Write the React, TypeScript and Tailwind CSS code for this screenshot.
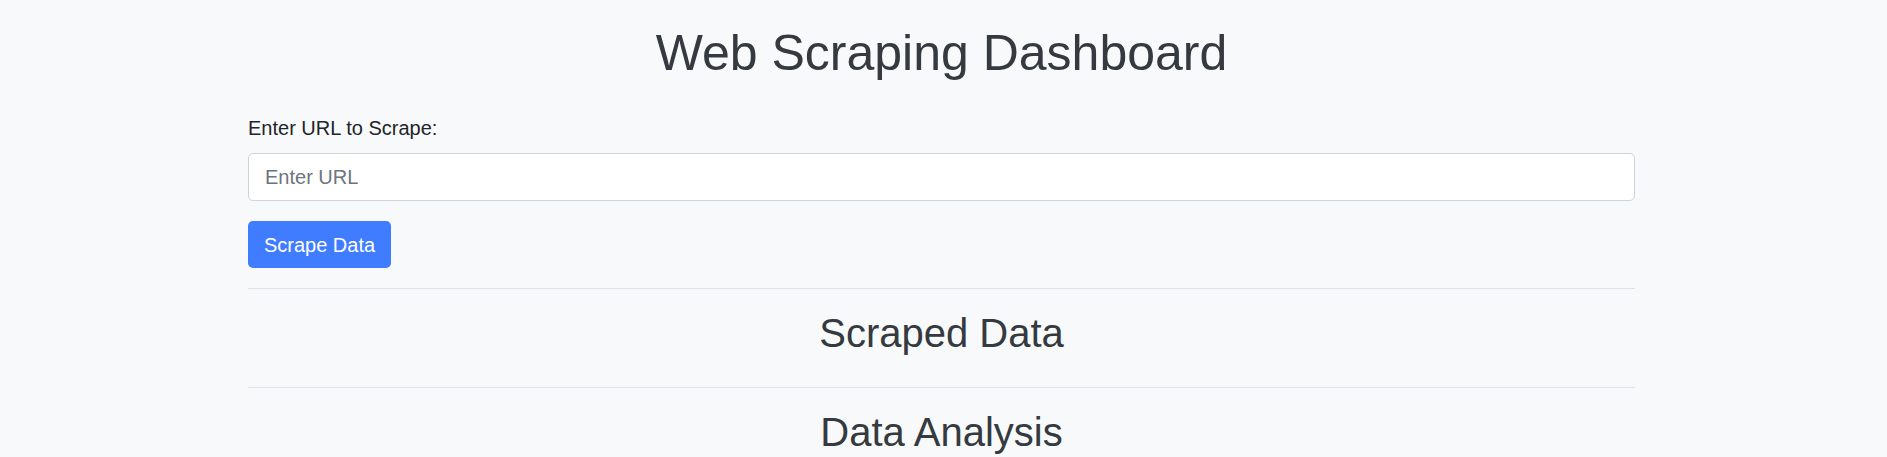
export default function App() {
  return (
    <div className="min-h-screen bg-[#f8f9fa] font-['Liberation_Sans',Arial,sans-serif] text-[#343a40]">
      <div className="ml-[248px] w-[1387px] pt-[23px]">
        <h1 className="text-center text-[50px] leading-[1.2] font-normal">Web Scraping Dashboard</h1>

        <div className="mt-[30px]">
          <label className="block text-[20px] leading-[1.5] text-[#212529]">Enter URL to Scrape:</label>
          <input
            type="text"
            placeholder="Enter URL"
            className="mt-[10px] block h-[48px] w-full rounded-[5px] border border-[#ced4da] bg-white px-4 text-[20px] text-[#495057] placeholder:text-[#6c757d] outline-none"
          />
          <button className="mt-[20px] h-[47px] w-[143px] rounded-[5px] bg-[#3f7cff] text-[20px] text-white">
            Scrape Data
          </button>
        </div>

        <hr className="mt-[20px] border-t border-[#dee2e6]" />
        <h2 className="mt-[20px] text-center text-[40px] leading-[1.2] font-normal">Scraped Data</h2>

        <hr className="mt-[30px] border-t border-[#dee2e6]" />
        <h2 className="mt-[20px] text-center text-[40px] leading-[1.2] font-normal">Data Analysis</h2>
      </div>
    </div>
  )
}
